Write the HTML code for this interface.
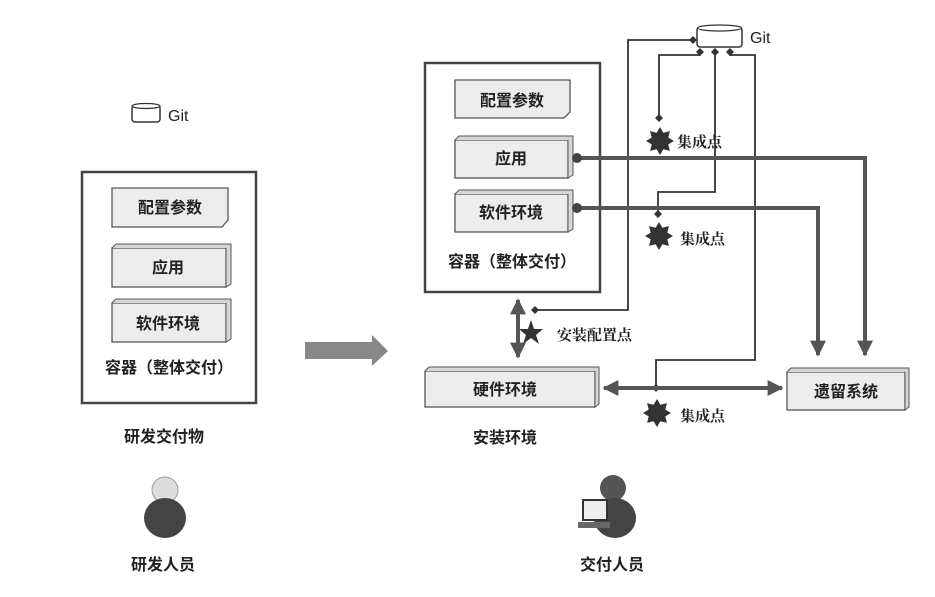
<!DOCTYPE html>
<html><head><meta charset="utf-8"><style>
html,body{margin:0;padding:0;background:#fff;width:935px;height:597px;overflow:hidden}
svg{display:block}
text{font-family:"Liberation Sans","Noto Sans CJK SC",sans-serif;fill:#222}
.b{font-weight:bold;font-size:16px}
.s{font-family:"Noto Serif CJK SC","Liberation Serif",serif;font-size:15px;font-weight:bold}
</style></head><body>
<svg width="935" height="597" viewBox="0 0 935 597">
<defs>
<marker id="ah" viewBox="0 0 10 10" refX="9" refY="5" markerWidth="4" markerHeight="4" orient="auto-start-reverse"><path d="M0,0 L10,5 L0,10 z" fill="#555"/></marker>
<g id="star"><path d="M0,-14 L3.4,-8.3 L9.9,-9.9 L8.3,-3.4 L14,0 L8.3,3.4 L9.9,9.9 L3.4,8.3 L0,14 L-3.4,8.3 L-9.9,9.9 L-8.3,3.4 L-14,0 L-8.3,-3.4 L-9.9,-9.9 L-3.4,-8.3 z" fill="#333"/></g>
<g id="star5"><path d="M0,-13 L3,-4 L12,-4 L5,2 L8,11 L0,5 L-8,11 L-5,2 L-12,-4 L-3,-4 z" fill="#333"/></g>
</defs>
<!-- LEFT -->
<rect x="132" y="105" width="28" height="17" rx="3" fill="#fff" stroke="#333" stroke-width="1.5"/>
<ellipse cx="146" cy="106" rx="14" ry="2.5" fill="#fff" stroke="#333" stroke-width="1.3"/>
<text x="168" y="121" font-size="16">Git</text>
<rect x="82" y="172" width="174" height="231" fill="#fff" stroke="#444" stroke-width="2.5"/>
<path d="M112,188 L228,188 L228,220 L222,227 L112,227 z" fill="#ececec" stroke="#555" stroke-width="1.3"/>
<text class="b" x="170" y="213" text-anchor="middle">配置参数</text>
<rect x="112" y="248" width="114" height="39" fill="#ececec" stroke="#555" stroke-width="1.3"/>
<path d="M112,248 L116,244 L231,244 L231,284 L226,287 L226,248" fill="#d5d5d5" stroke="#555" stroke-width="1"/>
<text class="b" x="168" y="273" text-anchor="middle">应用</text>
<rect x="112" y="303" width="114" height="39" fill="#ececec" stroke="#555" stroke-width="1.3"/>
<path d="M112,303 L116,299 L231,299 L231,339 L226,342 L226,303" fill="#d5d5d5" stroke="#555" stroke-width="1"/>
<text class="b" x="168" y="329" text-anchor="middle">软件环境</text>
<text class="b" x="169" y="373" text-anchor="middle">容器（整体交付）</text>
<text class="b" x="164" y="442" text-anchor="middle">研发交付物</text>
<circle cx="165" cy="490" r="13" fill="#ddd" stroke="#999"/>
<ellipse cx="165" cy="518" rx="21" ry="20" fill="#444"/>
<text class="b" x="163" y="570" text-anchor="middle">研发人员</text>
<!-- big arrow -->
<path d="M305,342 L372,342 L372,335 L388,351 L372,366 L372,359 L305,359 z" fill="#888"/>
<!-- RIGHT -->
<rect x="425" y="63" width="175" height="229" fill="#fff" stroke="#444" stroke-width="2.5"/>
<path d="M455,80 L570,80 L570,112 L564,118 L455,118 z" fill="#ececec" stroke="#555" stroke-width="1.3"/>
<text class="b" x="512" y="106" text-anchor="middle">配置参数</text>
<rect x="455" y="140" width="113" height="38" fill="#ececec" stroke="#555" stroke-width="1.3"/>
<path d="M455,140 L459,136 L573,136 L573,175 L568,178 L568,140" fill="#d5d5d5" stroke="#555" stroke-width="1"/>
<text class="b" x="511" y="164" text-anchor="middle">应用</text>
<rect x="455" y="194" width="113" height="38" fill="#ececec" stroke="#555" stroke-width="1.3"/>
<path d="M455,194 L459,190 L573,190 L573,229 L568,232 L568,194" fill="#d5d5d5" stroke="#555" stroke-width="1"/>
<text class="b" x="511" y="218" text-anchor="middle">软件环境</text>
<text class="b" x="512" y="267" text-anchor="middle">容器（整体交付）</text>
<!-- git -->
<rect x="697" y="27" width="45" height="20" rx="3" fill="#fff" stroke="#333" stroke-width="1.5"/>
<ellipse cx="719.5" cy="28" rx="22" ry="3" fill="#fff" stroke="#333" stroke-width="1.2"/>
<text x="750" y="43" font-size="16">Git</text>
<!-- thin lines -->
<g fill="none" stroke="#333" stroke-width="1.8">
<path d="M693,40 L628,40 L628,310 L535,310"/>
<path d="M700,52 L700,55 L659,55 L659,118"/>
<path d="M715,52 L715,192 L658,192 L658,214"/>
<path d="M730,52 L730,55 L755,55 L755,360 L656,360 L656,388"/>
</g>
<g fill="#333">
<path d="M693,36 L697,40 L693,44 L689,40z"/>
<path d="M700,48 L704,52 L700,56 L696,52z"/>
<path d="M715,48 L719,52 L715,56 L711,52z"/>
<path d="M730,48 L734,52 L730,56 L726,52z"/>
<path d="M659,114 L663,118 L659,122 L655,118z"/>
<path d="M658,210 L662,214 L658,218 L654,214z"/>
<path d="M656,384 L660,388 L656,392 L652,388z"/>
<path d="M535,306 L539,310 L535,314 L531,310z"/>
</g>
<!-- thick lines -->
<g fill="none" stroke="#555" stroke-width="4">
<path d="M578,158 L865,158 L865,355" marker-end="url(#ah)"/>
<path d="M578,208 L818,208 L818,355" marker-end="url(#ah)"/>
<path d="M518,300 L518,357" marker-end="url(#ah)" marker-start="url(#ah)"/>
<path d="M604,388 L782,388" marker-end="url(#ah)" marker-start="url(#ah)"/>
</g>
<circle cx="577" cy="158" r="5" fill="#444"/>
<circle cx="577" cy="208" r="5" fill="#444"/>
<use href="#star" x="660" y="141"/>
<text class="s" x="677" y="147">集成点</text>
<use href="#star" x="659" y="236"/>
<text class="s" x="680" y="244">集成点</text>
<use href="#star5" x="531" y="333"/>
<text class="s" x="557" y="340">安装配置点</text>
<use href="#star" x="657" y="413"/>
<text class="s" x="680" y="421">集成点</text>
<!-- hardware -->
<rect x="425" y="371" width="170" height="36" fill="#ececec" stroke="#555" stroke-width="1.3"/>
<path d="M425,371 L429,367 L599,367 L599,404 L595,407 L595,371" fill="#d5d5d5" stroke="#555" stroke-width="1"/>
<text class="b" x="505" y="395" text-anchor="middle">硬件环境</text>
<text class="b" x="505" y="443" text-anchor="middle">安装环境</text>
<rect x="787" y="372" width="118" height="38" fill="#ececec" stroke="#555" stroke-width="1.3"/>
<path d="M787,372 L791,368 L909,368 L909,407 L905,410 L905,372" fill="#d5d5d5" stroke="#555" stroke-width="1"/>
<text class="b" x="846" y="397" text-anchor="middle">遗留系统</text>
<!-- person 2 -->
<circle cx="613" cy="488" r="13" fill="#555"/>
<ellipse cx="615" cy="518" rx="21" ry="20" fill="#444"/>
<rect x="583" y="500" width="24" height="20" fill="#eee" stroke="#333" stroke-width="2"/>
<rect x="578" y="522" width="32" height="6" fill="#666"/>
<text class="b" x="612" y="570" text-anchor="middle">交付人员</text>
</svg>
</body></html>
